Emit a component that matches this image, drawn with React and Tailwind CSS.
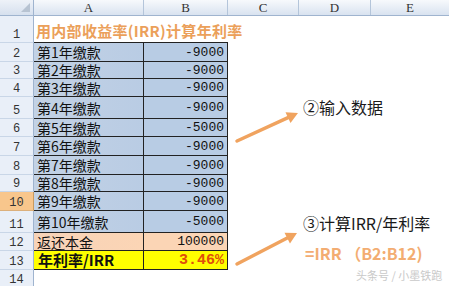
import React from 'react';

// 行高与内容
const rows = [
  { n: 1, h: 'h-[27px]' },
  { n: 2, h: 'h-[19px]', a: '第1年缴款', b: '-9000' },
  { n: 3, h: 'h-[17px]', a: '第2年缴款', b: '-9000' },
  { n: 4, h: 'h-[18px]', a: '第3年缴款', b: '-9000' },
  { n: 5, h: 'h-[22px]', a: '第4年缴款', b: '-9000' },
  { n: 6, h: 'h-[18px]', a: '第5年缴款', b: '-5000' },
  { n: 7, h: 'h-[19px]', a: '第6年缴款', b: '-9000' },
  { n: 8, h: 'h-[19px]', a: '第7年缴款', b: '-9000' },
  { n: 9, h: 'h-[17px]', a: '第8年缴款', b: '-9000' },
  { n: 10, h: 'h-[19px]', a: '第9年缴款', b: '-9000' },
  { n: 11, h: 'h-[22px]', a: '第10年缴款', b: '-5000' },
  { n: 12, h: 'h-[18px]', a: '返还本金', b: '100000', kind: 'peach' },
  { n: 13, h: 'h-[19px]', a: '年利率/IRR', b: '3.46%', kind: 'yellow' },
  { n: 14, h: 'h-[18px]' },
];

const CJK = "font-['Noto_Sans_CJK_SC','Noto_Sans',sans-serif]";
const MONO = "font-['Liberation_Mono','Noto_Sans_CJK_SC',monospace]";

function RowHeader({ n }) {
  return (
    <div
      className={`w-[34px] shrink-0 flex items-end justify-center pb-[1px] border-r border-b text-[12px] leading-none text-[#333] ${MONO} ${
        n === 10 ? 'bg-[#f8c68c] border-r-[#c99a5f] border-b-[#dcb07c]' : 'bg-[#e9eff8] border-r-[#9fb4cf] border-b-[#c9d6e7]'
      }`}
    >
      {n}
    </div>
  );
}

function SheetRow({ row }) {
  const { n, h, a, b, kind } = row;
  const inTable = a !== undefined;
  let aBg = 'bg-gradient-to-r from-[#c3d2e5] to-[#b9cce4]';
  let bBg = 'bg-[#b8cce4]';
  if (kind === 'peach') {
    aBg = 'bg-gradient-to-r from-[#f7d3b8] to-[#fbd5b5]';
    bBg = 'bg-[#fbd5b5]';
  }
  if (kind === 'yellow') {
    aBg = 'bg-[#ffff00]';
    bBg = 'bg-[#ffff00]';
  }
  return (
    <div className={`flex ${h}`}>
      <RowHeader n={n} />
      {n === 1 ? (
        <div className="w-[110px] shrink-0 relative border-b border-[#222]">
          <div
            className={`absolute left-[2px] top-[7px] whitespace-nowrap text-[15px] leading-none font-bold text-[#eba05a] tracking-[0.3px] ${CJK}`}
          >
            用内部收益率(IRR)计算年利率
          </div>
        </div>
      ) : inTable ? (
        <div
          className={`w-[110px] shrink-0 flex items-center border-b border-r border-[#222] leading-none text-[#111] ${CJK} ${aBg} ${
            kind === 'yellow' ? 'font-bold text-[15px] pl-[4px]' : 'text-[14px] pl-[3px]'
          }`}
        >
          <span className="leading-[14px]">{a}</span>
        </div>
      ) : (
        <div className="w-[110px] shrink-0" />
      )}
      {n === 1 ? (
        <div className="w-[84px] shrink-0 border-b border-[#222]" />
      ) : inTable ? (
        <div
          className={`w-[84px] shrink-0 flex items-center justify-end pr-[3px] border-b border-r border-[#222] leading-none ${MONO} ${bBg} ${
            kind === 'yellow' ? 'font-bold text-[15px] text-[#e0500a]' : 'text-[13px] text-[#111]'
          }`}
        >
          {b}
        </div>
      ) : (
        <div className="w-[84px] shrink-0" />
      )}
      <div className="flex-1 bg-white" />
    </div>
  );
}

function ColHeader({ label, w, last }) {
  return (
    <div
      className={`${w} shrink-0 h-full flex items-center justify-center text-[13px] leading-none text-[#333] font-['Liberation_Serif',serif] ${
        last ? '' : 'border-r border-[#b4c5da]'
      }`}
    >
      {label}
    </div>
  );
}

function Arrow({ x1, y1, x2, y2 }) {
  const ang = Math.atan2(y2 - y1, x2 - x1);
  const len = 11;
  const wid = 6;
  const bx = x2 - Math.cos(ang) * len;
  const by = y2 - Math.sin(ang) * len;
  const px = -Math.sin(ang) * wid;
  const py = Math.cos(ang) * wid;
  return (
    <g>
      <line x1={x1} y1={y1} x2={bx} y2={by} stroke="#f0a35f" strokeWidth="3.5" strokeLinecap="round" />
      <polygon points={`${x2},${y2} ${bx + px},${by + py} ${bx - px},${by - py}`} fill="#f0a35f" />
    </g>
  );
}

export default function App() {
  return (
    <div className={`relative w-[449px] h-[286px] overflow-hidden bg-white ${CJK}`}>
      {/* 列标题 */}
      <div className="flex h-[16px] bg-gradient-to-b from-[#f7f9fc] to-[#d9e3f0] border-b border-[#9fb4cf]">
        <div className="w-[34px] shrink-0 h-full relative border-r border-[#9fb4cf] bg-gradient-to-b from-[#eef2f8] to-[#d6e0ee]">
          <div className="absolute right-[3px] bottom-[3px] w-0 h-0 border-l-[9px] border-l-transparent border-b-[9px] border-b-[#b7c3d2]" />
        </div>
        <ColHeader label="A" w="w-[110px]" />
        <ColHeader label="B" w="w-[84px]" />
        <ColHeader label="C" w="w-[71px]" />
        <ColHeader label="D" w="w-[72px]" />
        <ColHeader label="E" w="flex-1" last />
      </div>

      {rows.map((r) => (
        <SheetRow key={r.n} row={r} />
      ))}

      {/* 箭头 */}
      <svg className="absolute left-0 top-0" width="449" height="286">
        <Arrow x1={237} y1={141} x2={298} y2={113} />
        <Arrow x1={237} y1={264} x2={297} y2={233} />
      </svg>

      {/* 注释文字 */}
      <div className="absolute left-[303px] top-[99px] text-[16px] leading-none text-[#1a1a1a]">②输入数据</div>
      <div className="absolute left-[303px] top-[215px] text-[16px] leading-none text-[#1a1a1a]">③计算IRR/年利率</div>
      <div className="absolute left-[305px] top-[245px] text-[16px] leading-none font-bold text-[#f3ad72] whitespace-nowrap">
        =IRR （B2:B12)
      </div>
      <div className="absolute left-[356px] top-[270px] text-[11px] leading-none text-[#c9c9c9] whitespace-nowrap">
        头条号 / 小墨铁跑
      </div>
    </div>
  );
}
